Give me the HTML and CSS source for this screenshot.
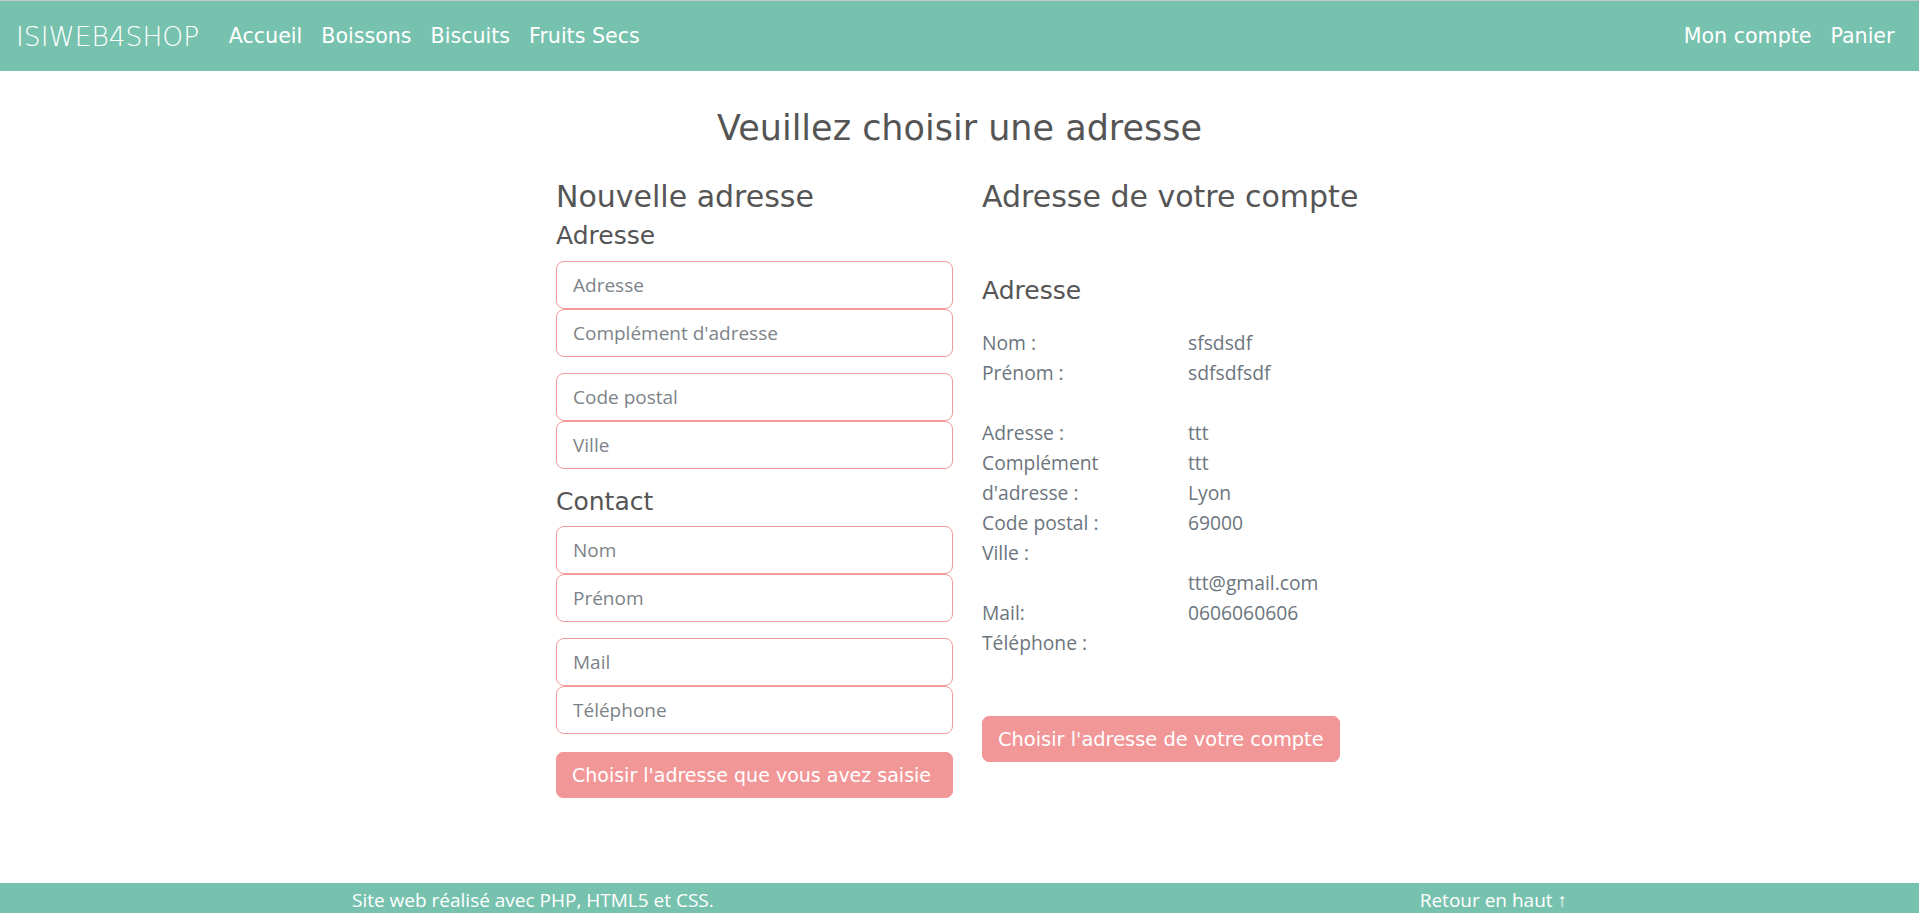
FILE: index.html
```html
<!DOCTYPE html>
<html lang="fr">
<head>
<meta charset="utf-8">
<title>ISIWEB4SHOP - Adresse</title>
<link rel="stylesheet" href="styles.css">
</head>
<body>
<nav class="navbar">
  <a class="brand" href="#">ISIWEB4SHOP</a>
  <ul class="nav-links">
    <li><a href="#">Accueil</a></li>
    <li><a href="#">Boissons</a></li>
    <li><a href="#">Biscuits</a></li>
    <li><a href="#">Fruits Secs</a></li>
  </ul>
  <ul class="nav-links nav-right">
    <li><a href="#">Mon compte</a></li>
    <li><a href="#">Panier</a></li>
  </ul>
</nav>

<main class="page">
  <h2 class="page-title">Veuillez choisir une adresse</h2>
  <div class="columns">
    <section class="col">
      <h3 class="col-title">Nouvelle adresse</h3>
      <form class="address-form">
        <h4 class="sub-title">Adresse</h4>
        <div class="field-group">
          <input class="field" type="text" placeholder="Adresse">
          <input class="field" type="text" placeholder="Complément d'adresse">
        </div>
        <div class="field-group">
          <input class="field" type="text" placeholder="Code postal">
          <input class="field" type="text" placeholder="Ville">
        </div>
        <h4 class="sub-title contact-title">Contact</h4>
        <div class="field-group">
          <input class="field" type="text" placeholder="Nom">
          <input class="field" type="text" placeholder="Prénom">
        </div>
        <div class="field-group">
          <input class="field" type="text" placeholder="Mail">
          <input class="field" type="text" placeholder="Téléphone">
        </div>
        <button class="btn btn-block" type="button">Choisir l'adresse que vous avez saisie</button>
      </form>
    </section>

    <section class="col col-account">
      <h3 class="col-title">Adresse de votre compte</h3>
      <h4 class="sub-title account-sub">Adresse</h4>
      <div class="account-info">
        <div class="labels">
          <span>Nom :</span>
          <span>Prénom :</span>
          <span class="blank">&nbsp;</span>
          <span>Adresse :</span>
          <span>Complément d'adresse :</span>
          <span>Code postal :</span>
          <span>Ville :</span>
          <span class="blank">&nbsp;</span>
          <span>Mail:</span>
          <span>Téléphone :</span>
        </div>
        <div class="values">
          <span>sfsdsdf</span>
          <span>sdfsdfsdf</span>
          <span class="blank">&nbsp;</span>
          <span>ttt</span>
          <span>ttt</span>
          <span>Lyon</span>
          <span>69000</span>
          <span class="blank">&nbsp;</span>
          <span>ttt@gmail.com</span>
          <span>0606060606</span>
        </div>
      </div>
      <button class="btn btn-account" type="button">Choisir l'adresse de votre compte</button>
    </section>
  </div>
</main>

<footer class="footer">
  <div class="footer-inner">
    <span>Site web réalisé avec PHP, HTML5 et CSS.</span>
    <a href="#">Retour en haut ↑</a>
  </div>
</footer>
</body>
</html>
```

FILE: styles.css
```css
* { box-sizing: border-box; }

body {
  margin: 0;
  border-top: 1px solid #c6c6c6;
  font-family: "Open Sans", "Noto Sans", sans-serif;
  color: #6c757d;
  background: #fff;
}

a { text-decoration: none; color: inherit; }

/* Navbar */
.navbar {
  height: 70px;
  background: #77c2ae;
  display: flex;
  align-items: center;
  padding: 0 16px;
  font-family: "DejaVu Sans", sans-serif;
  color: #fff;
}

.brand {
  font-size: 26.5px;
  font-weight: 300;
  margin-right: 20px;
}

.nav-links {
  list-style: none;
  display: flex;
  margin: 0;
  padding: 0;
}

.nav-links a {
  display: block;
  padding: 8px 9.5px;
  font-size: 20.6px;
}

.nav-right { margin-left: auto; margin-right: -1px; }

/* Main */
.page { padding-bottom: 85px; }

.page-title {
  margin: 36px 0 30px;
  text-align: center;
  font-family: "DejaVu Sans", sans-serif;
  font-weight: 400;
  font-size: 35px;
  line-height: 42px;
  color: #555;
}

.columns {
  display: grid;
  grid-template-columns: 397px 397px;
  column-gap: 29px;
  justify-content: center;
  padding-left: 16px;
}

.col-title {
  margin: 0 0 6px;
  font-family: "DejaVu Sans", sans-serif;
  font-weight: 400;
  font-size: 30px;
  line-height: 36px;
  color: #555;
}

.sub-title {
  margin: 0 0 10px;
  font-family: "DejaVu Sans", sans-serif;
  font-weight: 400;
  font-size: 25px;
  line-height: 30px;
  color: #555;
}

.contact-title { margin-top: 2px; margin-bottom: 9px; }

.address-form { display: flex; flex-direction: column; }

.field-group {
  display: flex;
  flex-direction: column;
  margin-bottom: 16px;
}

.field {
  height: 48px;
  padding: 8px 16px;
  border: 1px solid #f39a9b;
  border-radius: 8px;
  font-family: "Open Sans", sans-serif;
  font-size: 19px;
  color: #495057;
  background: #fff;
}

.field::placeholder { color: #7d8389; }

.btn {
  height: 46px;
  padding: 0 15px;
  border: 1px solid #f29798;
  border-radius: 7px;
  background: #f29798;
  color: #fff;
  font-family: "DejaVu Sans", sans-serif;
  font-size: 19.4px;
  text-align: left;
  white-space: nowrap;
}

.btn-block { width: 100%; margin-top: 2px; font-size: 19px; }

.col-account { display: flex; flex-direction: column; align-items: flex-start; }

.account-sub { margin-top: 55px; margin-bottom: 22px; }

.account-info {
  width: 100%;
  display: grid;
  grid-template-columns: 206px 1fr;
  font-size: 19.3px;
  line-height: 30px;
}

.labels, .values { display: flex; flex-direction: column; }

.labels span { max-width: 125px; }

.btn-account { margin-top: 58px; }

/* Footer */
.footer {
  background: #77c2ae;
  color: #fff;
  height: 56px;
  padding-top: 4px;
  font-size: 19px;
}

.footer-inner {
  width: 1215px;
  margin: 0 auto;
  display: flex;
  justify-content: space-between;
}
```
